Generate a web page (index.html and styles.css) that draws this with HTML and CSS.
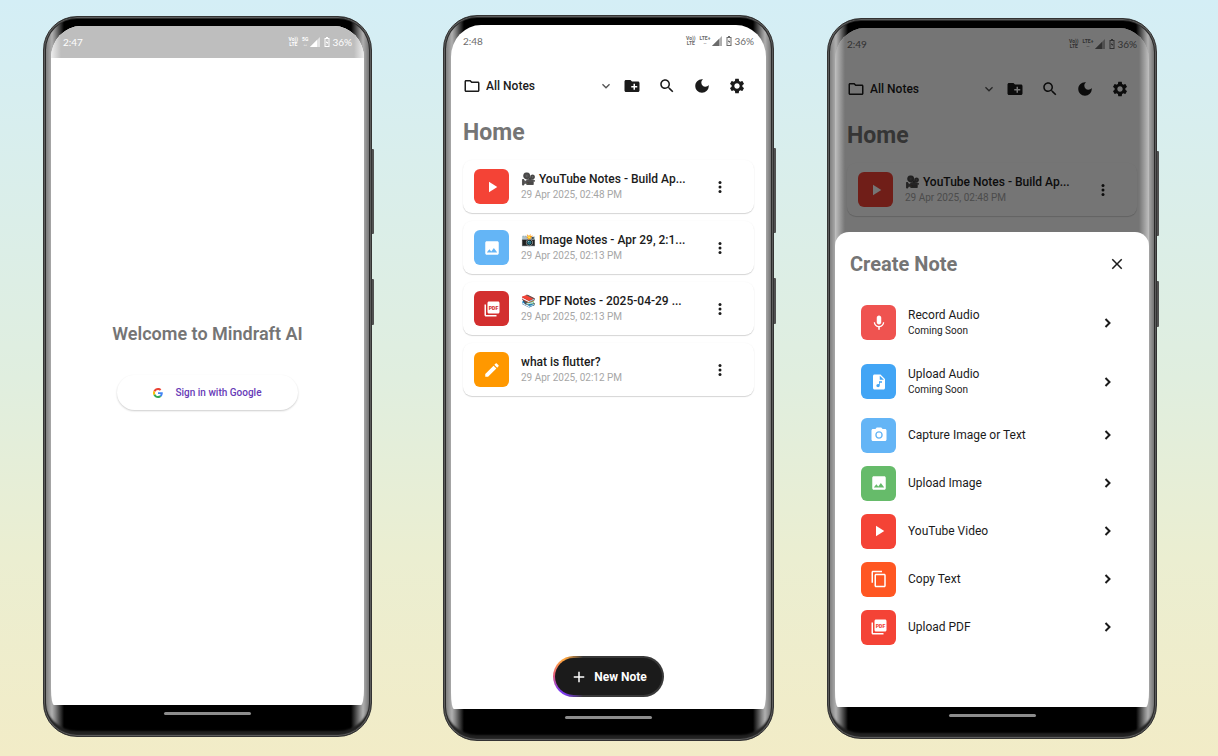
FILE: index.html
```html
<!DOCTYPE html>
<html lang="en">
<head>
<meta charset="utf-8">
<meta name="viewport" content="width=device-width, initial-scale=1">
<title>Mindraft AI</title>
<link rel="stylesheet" href="styles.css">
</head>
<body>
<svg class="sprite" aria-hidden="true">
  <symbol id="folder" viewBox="0 0 24 24"><path d="M9.17 6l2 2H20v10H4V6h5.17M10 4H4c-1.1 0-1.99.9-1.99 2L2 18c0 1.1.9 2 2 2h16c1.1 0 2-.9 2-2V8c0-1.1-.9-2-2-2h-8l-2-2z"/></symbol>
  <symbol id="expand" viewBox="0 0 24 24"><path d="M16.59 8.59L12 13.17 7.41 8.59 6 10l6 6 6-6z"/></symbol>
  <symbol id="folder-add" viewBox="0 0 24 24"><path d="M20 6h-8l-2-2H4c-1.11 0-1.99.89-1.99 2L2 18c0 1.11.89 2 2 2h16c1.11 0 2-.89 2-2V8c0-1.11-.89-2-2-2zm-1 8h-3v3h-2v-3h-3v-2h3V9h2v3h3v2z"/></symbol>
  <symbol id="search" viewBox="0 0 24 24"><path d="M15.5 14h-.79l-.28-.27C15.41 12.59 16 11.11 16 9.5 16 5.91 13.09 3 9.5 3S3 5.91 3 9.5 5.91 16 9.5 16c1.61 0 3.09-.59 4.23-1.57l.27.28v.79l5 4.99L20.49 19l-4.99-5zm-6 0C7.01 14 5 11.99 5 9.5S7.01 5 9.5 5 14 7.01 14 9.5 11.99 14 9.5 14z"/></symbol>
  <symbol id="moon" viewBox="0 0 24 24"><path d="M12 3c-4.97 0-9 4.03-9 9s4.03 9 9 9 9-4.03 9-9c0-.46-.04-.92-.1-1.36-.98 1.37-2.58 2.26-4.4 2.26-2.98 0-5.4-2.42-5.4-5.4 0-1.81.89-3.42 2.26-4.4-.44-.06-.9-.1-1.36-.1z"/></symbol>
  <symbol id="gear" viewBox="0 0 24 24"><path d="M19.14 12.94c.04-.3.06-.61.06-.94 0-.32-.02-.64-.07-.94l2.03-1.58c.18-.14.23-.41.12-.61l-1.92-3.32c-.12-.22-.37-.29-.59-.22l-2.39.96c-.5-.38-1.03-.7-1.62-.94l-.36-2.54c-.04-.24-.24-.41-.48-.41h-3.84c-.24 0-.43.17-.47.41l-.36 2.54c-.59.24-1.13.57-1.62.94l-2.39-.96c-.22-.08-.47 0-.59.22L2.74 8.87c-.12.21-.08.47.12.61l2.03 1.58c-.05.3-.09.63-.09.94s.02.64.07.94l-2.03 1.58c-.18.14-.23.41-.12.61l1.92 3.32c.12.22.37.29.59.22l2.39-.96c.5.38 1.03.7 1.62.94l.36 2.54c.05.24.24.41.48.41h3.84c.24 0 .44-.17.47-.41l.36-2.54c.59-.24 1.13-.56 1.62-.94l2.39.96c.22.08.47 0 .59-.22l1.92-3.32c.12-.22.07-.47-.12-.61l-2.01-1.58zM12 15.6c-1.98 0-3.6-1.62-3.6-3.6s1.62-3.6 3.6-3.6 3.6 1.62 3.6 3.6-1.62 3.6-3.6 3.6z"/></symbol>
  <symbol id="play" viewBox="0 0 24 24"><path d="M8 5v14l11-7z"/></symbol>
  <symbol id="image" viewBox="0 0 24 24"><path d="M21 19V5c0-1.100-.9-2-2-2H5c-1.100 0-2 .9-2 2v14c0 1.100.9 2 2 2h14c1.100 0 2-.9 2-2zM8.500 13.500l2.500 3.010L14.500 12l4.500 6H5l3.500-4.500z"/></symbol>
  <symbol id="pdf" viewBox="0 0 24 24"><path d="M20 2H8c-1.100 0-2 .9-2 2v12c0 1.100.9 2 2 2h12c1.100 0 2-.9 2-2V4c0-1.100-.9-2-2-2zM4 6H2v14c0 1.100.9 2 2 2h14v-2H4V6z"/><text x="14" y="13" text-anchor="middle" class="pdf-label">PDF</text></symbol>
  <symbol id="pencil" viewBox="0 0 24 24"><path d="M3 17.250V21h3.750L17.810 9.940l-3.750-3.750L3 17.250zM20.710 7.040c.39-.39.39-1.020 0-1.410l-2.340-2.340c-.39-.39-1.020-.39-1.410 0l-1.830 1.830 3.750 3.750 1.830-1.830z"/></symbol>
  <symbol id="more" viewBox="0 0 24 24"><circle cx="12" cy="6" r="2"/><circle cx="12" cy="12" r="2"/><circle cx="12" cy="18" r="2"/></symbol>
  <symbol id="mic" viewBox="0 0 24 24"><path d="M12 14c1.660 0 2.990-1.340 2.990-3L15 5c0-1.660-1.340-3-3-3S9 3.340 9 5v6c0 1.660 1.340 3 3 3zm5.300-3c0 3-2.540 5.100-5.300 5.100S6.700 14 6.700 11H5c0 3.410 2.720 6.230 6 6.720V21h2v-3.280c3.280-.48 6-3.300 6-6.720h-1.700z"/></symbol>
  <symbol id="audio" viewBox="0 0 24 24"><path d="M14 2H6c-1.100 0-1.990.9-1.990 2L4 20c0 1.100.89 2 1.990 2H18c1.100 0 2-.9 2-2V8l-6-6zm2 11h-3v3.750c0 1.240-1.010 2.250-2.250 2.250S8.500 17.990 8.500 16.750s1.010-2.250 2.250-2.250c.46 0 .89.14 1.250.38V11h4v2zm-3-4V3.500L18.500 9H13z"/></symbol>
  <symbol id="camera" viewBox="0 0 24 24"><circle cx="12" cy="12" r="3.200"/><path d="M9 2L7.170 4H4c-1.100 0-2 .9-2 2v12c0 1.100.9 2 2 2h16c1.100 0 2-.9 2-2V6c0-1.100-.9-2-2-2h-3.170L15 2H9zm3 15c-2.760 0-5-2.240-5-5s2.240-5 5-5 5 2.240 5 5-2.240 5-5 5z"/></symbol>
  <symbol id="copy" viewBox="0 0 24 24"><path d="M16 1H4c-1.100 0-2 .9-2 2v14h2V3h12V1zm3 4H8c-1.100 0-2 .9-2 2v14c0 1.100.9 2 2 2h11c1.100 0 2-.9 2-2V7c0-1.100-.9-2-2-2zm0 16H8V7h11v14z"/></symbol>
  <symbol id="close" viewBox="0 0 24 24"><path d="M19 6.410L17.590 5 12 10.590 6.410 5 5 6.410 10.590 12 5 17.590 6.410 19 12 13.410 17.590 19 19 17.590 13.410 12z"/></symbol>
  <symbol id="next" viewBox="0 0 24 24"><path d="M7 4l8 8-8 8" fill="none" stroke="currentColor" stroke-width="4"/></symbol>
  <symbol id="plus" viewBox="0 0 24 24"><path d="M19 13h-6v6h-2v-6H5v-2h6V5h2v6h6v2z"/></symbol>
  <symbol id="signal" viewBox="0 0 10 10"><path d="M0 10L10 0v10z" opacity=".55"/><path d="M0 10L7 3v7z"/></symbol>
  <symbol id="battery" viewBox="0 0 6 10"><path d="M2 0h2v1h1.500v9h-5V1H2z M1.500 2v7h3V2z" fill-rule="evenodd"/><path d="M3.500 2.500L1.800 6H3l-.5 2.500L4.300 5H3z"/></symbol>
  <symbol id="google" viewBox="0 0 48 48"><path fill="#EA4335" d="M24 9.500c3.540 0 6.710 1.220 9.210 3.600l6.850-6.850C35.900 2.380 30.470 0 24 0 14.620 0 6.510 5.380 2.560 13.220l7.980 6.190C12.430 13.720 17.740 9.500 24 9.500z"/><path fill="#4285F4" d="M46.980 24.550c0-1.570-.15-3.090-.38-4.550H24v9.020h12.940c-.58 2.960-2.260 5.480-4.780 7.180l7.730 6c4.510-4.180 7.090-10.360 7.090-17.650z"/><path fill="#FBBC05" d="M10.530 28.590c-.48-1.450-.76-2.990-.76-4.590s.27-3.140.76-4.590l-7.980-6.190C.92 16.460 0 20.120 0 24c0 3.880.92 7.540 2.560 10.780l7.970-6.190z"/><path fill="#34A853" d="M24 48c6.480 0 11.930-2.130 15.890-5.810l-7.730-6c-2.150 1.450-4.920 2.300-8.160 2.300-6.260 0-11.570-4.220-13.470-9.910l-7.980 6.190C6.510 42.620 14.620 48 24 48z"/></symbol>
</svg>

<main class="stage">
  <section class="phone phone-welcome" aria-label="Welcome screen">
    <i class="side-key volume"></i><i class="side-key power"></i>
    <div class="screen">
      <div class="status status-light">
        <time>2:47</time>
        <span class="stack"><b>Vo))</b><b>LTE</b></span>
        <span class="stack net"><b>5G</b><b>↔</b></span>
        <svg class="signal"><use href="#signal"/></svg>
        <svg class="battery"><use href="#battery"/></svg>
        <span class="percent">36%</span>
      </div>
      <div class="welcome">
        <h1 class="welcome-title">Welcome to Mindraft AI</h1>
        <button class="google-button"><svg class="google"><use href="#google"/></svg>Sign in with Google</button>
      </div>
    </div>
    <div class="navbar"><i class="handle"></i></div>
  </section>

  <section class="phone phone-home" aria-label="Home screen">
    <i class="side-key volume"></i><i class="side-key power"></i>
    <div class="screen">
      <div class="status">
        <time>2:48</time>
        <span class="stack"><b>Vo))</b><b>LTE</b></span>
        <span class="stack net"><b>LTE+</b><b>··</b></span>
        <svg class="signal"><use href="#signal"/></svg>
        <svg class="battery"><use href="#battery"/></svg>
        <span class="percent">36%</span>
      </div>
      <header class="toolbar">
        <label class="picker"><svg class="icon"><use href="#folder"/></svg>
          <select class="picker-select" aria-label="Notebook"><option>All Notes</option></select>
          <svg class="icon chevron"><use href="#expand"/></svg></label>
        <button class="tool" aria-label="New folder"><svg class="icon"><use href="#folder-add"/></svg></button>
        <button class="tool" aria-label="Search"><svg class="icon"><use href="#search"/></svg></button>
        <button class="tool" aria-label="Dark mode"><svg class="icon"><use href="#moon"/></svg></button>
        <button class="tool" aria-label="Settings"><svg class="icon"><use href="#gear"/></svg></button>
      </header>
      <h2 class="page-title">Home</h2>
      <div class="notes">
        <article class="note">
          <span class="tile red"><svg class="icon"><use href="#play"/></svg></span>
          <div class="note-text"><h3 class="note-title">🎥 YouTube Notes - Build Ap...</h3><p class="note-date">29 Apr 2025, 02:48 PM</p></div>
          <button class="more" aria-label="More"><svg class="icon"><use href="#more"/></svg></button>
        </article>
        <article class="note">
          <span class="tile sky"><svg class="icon"><use href="#image"/></svg></span>
          <div class="note-text"><h3 class="note-title">📸 Image Notes - Apr 29, 2:1...</h3><p class="note-date">29 Apr 2025, 02:13 PM</p></div>
          <button class="more" aria-label="More"><svg class="icon"><use href="#more"/></svg></button>
        </article>
        <article class="note">
          <span class="tile crimson"><svg class="icon"><use href="#pdf"/></svg></span>
          <div class="note-text"><h3 class="note-title">📚 PDF Notes - 2025-04-29 ...</h3><p class="note-date">29 Apr 2025, 02:13 PM</p></div>
          <button class="more" aria-label="More"><svg class="icon"><use href="#more"/></svg></button>
        </article>
        <article class="note">
          <span class="tile amber"><svg class="icon"><use href="#pencil"/></svg></span>
          <div class="note-text"><h3 class="note-title">what is flutter?</h3><p class="note-date">29 Apr 2025, 02:12 PM</p></div>
          <button class="more" aria-label="More"><svg class="icon"><use href="#more"/></svg></button>
        </article>
      </div>
      <button class="new-note"><svg class="icon"><use href="#plus"/></svg>New Note</button>
    </div>
    <div class="navbar"><i class="handle"></i></div>
  </section>

  <section class="phone phone-create" aria-label="Create note screen">
    <i class="side-key volume"></i><i class="side-key power"></i>
    <div class="screen">
      <div class="status">
        <time>2:49</time>
        <span class="stack"><b>Vo))</b><b>LTE</b></span>
        <span class="stack net"><b>LTE+</b><b>··</b></span>
        <svg class="signal"><use href="#signal"/></svg>
        <svg class="battery"><use href="#battery"/></svg>
        <span class="percent">36%</span>
      </div>
      <header class="toolbar">
        <label class="picker"><svg class="icon"><use href="#folder"/></svg>
          <select class="picker-select" aria-label="Notebook"><option>All Notes</option></select>
          <svg class="icon chevron"><use href="#expand"/></svg></label>
        <button class="tool" aria-label="New folder"><svg class="icon"><use href="#folder-add"/></svg></button>
        <button class="tool" aria-label="Search"><svg class="icon"><use href="#search"/></svg></button>
        <button class="tool" aria-label="Dark mode"><svg class="icon"><use href="#moon"/></svg></button>
        <button class="tool" aria-label="Settings"><svg class="icon"><use href="#gear"/></svg></button>
      </header>
      <h2 class="page-title">Home</h2>
      <div class="notes">
        <article class="note">
          <span class="tile red"><svg class="icon"><use href="#play"/></svg></span>
          <div class="note-text"><h3 class="note-title">🎥 YouTube Notes - Build Ap...</h3><p class="note-date">29 Apr 2025, 02:48 PM</p></div>
          <button class="more" aria-label="More"><svg class="icon"><use href="#more"/></svg></button>
        </article>
      </div>
      <div class="scrim"></div>
      <div class="sheet" role="dialog" aria-labelledby="sheet-title">
        <header class="sheet-head">
          <h2 class="sheet-title" id="sheet-title">Create Note</h2>
          <button class="close" aria-label="Close"><svg class="icon"><use href="#close"/></svg></button>
        </header>
        <button class="option option-tall"><span class="tile coral"><svg class="icon"><use href="#mic"/></svg></span><span class="option-text">Record Audio<small class="option-note">Coming Soon</small></span><svg class="next"><use href="#next"/></svg></button>
        <button class="option option-tall"><span class="tile blue"><svg class="icon"><use href="#audio"/></svg></span><span class="option-text">Upload Audio<small class="option-note">Coming Soon</small></span><svg class="next"><use href="#next"/></svg></button>
        <button class="option"><span class="tile sky"><svg class="icon"><use href="#camera"/></svg></span><span class="option-text">Capture Image or Text</span><svg class="next"><use href="#next"/></svg></button>
        <button class="option"><span class="tile green"><svg class="icon"><use href="#image"/></svg></span><span class="option-text">Upload Image</span><svg class="next"><use href="#next"/></svg></button>
        <button class="option"><span class="tile red"><svg class="icon"><use href="#play"/></svg></span><span class="option-text">YouTube Video</span><svg class="next"><use href="#next"/></svg></button>
        <button class="option"><span class="tile orange"><svg class="icon"><use href="#copy"/></svg></span><span class="option-text">Copy Text</span><svg class="next"><use href="#next"/></svg></button>
        <button class="option"><span class="tile red"><svg class="icon"><use href="#pdf"/></svg></span><span class="option-text">Upload PDF</span><svg class="next"><use href="#next"/></svg></button>
      </div>
    </div>
    <div class="navbar"><i class="handle"></i></div>
  </section>
</main>
</body>
</html>
```
FILE: styles.css
```css
* { box-sizing: border-box; }

body {
  margin: 0;
  font-family: Roboto, "Noto Color Emoji", sans-serif;
  color: #1b1b1b;
}

h1, h2, h3, p { margin: 0; }

button, select {
  margin: 0;
  padding: 0;
  border: 0;
  background: none;
  color: inherit;
  font: inherit;
}

svg { display: block; flex: none; fill: currentColor; }

.sprite { display: none; }

.icon { width: 18px; height: 18px; }

.stage {
  display: grid;
  grid-template-columns: 43fr 329fr 71fr 331fr 53fr 330fr 61fr;
  min-height: 100vh;
  background: linear-gradient(#d4eef6, #e0eedf 50%, #ebeed1 74%, #f2ecc7);
}

/* Device frame */
.phone {
  position: relative;
  display: flex;
  flex-direction: column;
  padding: 9px 7px 2px;
  border: 1px solid #333;
  border-radius: 34px;
  background: linear-gradient(90deg, #707070, #b0b0b0 8px, #8a8a8a 11px, #000 20px, #000 calc(100% - 20px), #8a8a8a calc(100% - 11px), #b0b0b0 calc(100% - 8px), #606060);
  box-shadow: inset 0 0 0 1px #5c5c5c, inset 0 0 0 2px #2a2a2a, inset 0 -5px 2px #222;
}

.phone-welcome { grid-column: 2; margin: 16px 0 19px; }
.phone-home { grid-column: 4; margin: 15px 0; }
.phone-create { grid-column: 6; margin: 18px 0 17px; }

.side-key {
  position: absolute;
  right: -3px;
  width: 2px;
  border-radius: 0 1px 1px 0;
  background: #505050;
}

.volume { top: 132px; height: 85px; }
.power { top: 262px; height: 46px; }

.screen {
  position: relative;
  display: flex;
  flex: 1;
  flex-direction: column;
  overflow: hidden;
  border-radius: 30px 30px 3px 3px / 32px 32px 16px 16px;
  background: #fff;
}

.navbar {
  display: flex;
  justify-content: center;
  height: 29px;
  padding-top: 7px;
}

.handle {
  width: 87px;
  height: 3px;
  border-radius: 2px;
  background: #8c8c8c;
}

/* Status bar */
.status {
  display: flex;
  align-items: center;
  height: 32px;
  padding: 0 12px;
  color: #6b6b6b;
  font-family: Lato, sans-serif;
  font-size: 10px;
  line-height: 16px;
}

.status time { flex: 1; }

.status-light {
  background: linear-gradient(90deg, #eee, #bebebe 10px, #bebebe calc(100% - 10px), #eee);
  color: #fff;
}

.stack {
  display: grid;
  justify-items: center;
  margin-right: 4px;
  font-family: Roboto, sans-serif;
  font-size: 5px;
  line-height: 5px;
}

.stack b { font-weight: 700; }
.net { margin-right: 2px; }
.signal { width: 10px; height: 10px; margin-right: 4px; }
.battery { width: 6px; height: 10px; margin-right: 2px; }

/* Welcome */
.welcome {
  display: flex;
  flex: 1;
  flex-direction: column;
  align-items: center;
  justify-content: center;
  gap: 30px;
  padding-bottom: 30px;
}

.welcome-title {
  color: #757575;
  font-size: 18px;
  font-weight: 600;
  line-height: 22px;
}

.google-button {
  display: flex;
  align-items: center;
  justify-content: center;
  gap: 12px;
  width: 58%;
  height: 35px;
  border-radius: 18px;
  background: #fff;
  box-shadow: 0 1px 2px rgba(0, 0, 0, .2);
  color: #673ab7;
  font-size: 10px;
  font-weight: 500;
}

.google { width: 10px; height: 10px; }

/* Home */
.toolbar {
  display: flex;
  align-items: center;
  padding: 11px 12px 0;
}

.picker {
  display: flex;
  flex: 1;
  align-items: center;
  gap: 5px;
  min-width: 0;
}

.picker-select {
  flex: 1;
  min-width: 0;
  appearance: none;
  font-size: 12px;
  font-weight: 500;
}

.chevron { width: 16px; height: 16px; color: #555; }

.tool {
  display: grid;
  place-items: center;
  width: 35px;
  height: 35px;
}

.page-title {
  padding: 16px 12px 0;
  color: #757575;
  font-size: 23px;
  font-weight: 700;
  line-height: 28px;
}

.notes {
  display: grid;
  gap: 8px;
  padding: 13px 12px 0;
}

.note {
  display: flex;
  align-items: center;
  height: 53px;
  padding: 0 25px 0 11px;
  border-radius: 9px;
  background: #fff;
  box-shadow: 0 1px 1px rgba(0, 0, 0, .16), 0 0 2px rgba(0, 0, 0, .04);
}

.note-text { flex: 1; min-width: 0; padding-left: 12px; }

.note-title {
  font-size: 12px;
  font-weight: 500;
  line-height: 16px;
  white-space: nowrap;
}

.note-date {
  color: #a6a6a6;
  font-size: 10px;
  line-height: 16px;
}

.tile {
  display: grid;
  flex: none;
  place-items: center;
  width: 35px;
  height: 35px;
  border-radius: 6px;
  background: var(--tile);
  color: #fff;
}

.red { --tile: #f44336; }
.crimson { --tile: #d32f2f; }
.sky { --tile: #64b5f6; }
.blue { --tile: #42a5f5; }
.amber { --tile: #ff9800; }
.coral { --tile: #ef5350; }
.green { --tile: #66bb6a; }
.orange { --tile: #ff5722; }

.pdf-label {
  fill: var(--tile);
  font-size: 7px;
  font-weight: 900;
}

.new-note {
  display: flex;
  align-items: center;
  justify-content: center;
  gap: 6px;
  align-self: center;
  width: 111px;
  height: 41px;
  margin: auto 0 12px;
  border: 2px solid transparent;
  border-radius: 21px;
  background:
    linear-gradient(#1b1b1b, #1b1b1b) padding-box,
    linear-gradient(90deg, transparent 12px, #383838 30px) border-box,
    linear-gradient(#ffa640 10%, #e8607a 45%, #7c3aed 85%) border-box;
  color: #fff;
  font-size: 12px;
  font-weight: 700;
}

/* Create note sheet */
.scrim {
  position: absolute;
  inset: 0;
  background:
    linear-gradient(90deg, rgba(255, 255, 255, .55), transparent 10px, transparent calc(100% - 10px), rgba(255, 255, 255, .55)),
    rgba(0, 0, 0, .54);
}

.sheet {
  position: absolute;
  right: 0;
  bottom: 0;
  left: 0;
  padding: 12px 15px 56px;
  border-radius: 14px 14px 0 0;
  background: #fff;
}

.sheet-head {
  display: flex;
  align-items: center;
  justify-content: space-between;
  height: 40px;
  margin-bottom: 9px;
}

.sheet-title {
  color: #757575;
  font-size: 20px;
  font-weight: 700;
}

.close {
  display: grid;
  place-items: center;
  width: 35px;
  height: 35px;
}

.option {
  display: flex;
  align-items: center;
  gap: 12px;
  width: 100%;
  height: 48px;
  padding: 0 20px 0 11px;
  font-size: 12px;
  line-height: 16px;
  text-align: left;
}

.option-tall { height: 59px; }

.option-text { flex: 1; }

.option-note {
  display: block;
  font-size: 10px;
}

.next { width: 12px; height: 12px; }
```
